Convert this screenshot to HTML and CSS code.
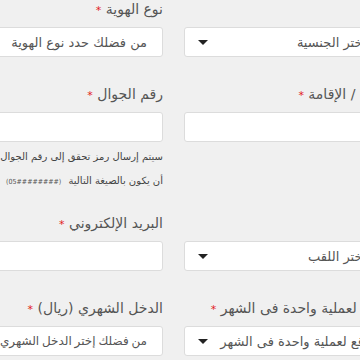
FILE: index.html
```html
<!DOCTYPE html>
<html lang="ar">
<head>
    <meta charset="UTF-8">
    <meta name="viewport" content="width=device-width, initial-scale=1.0">
    <title>التسجيل</title>
    <link rel="stylesheet" href="styles.css">
</head>
<body>
    <form class="reg-form">
        <div class="form-row">
            <div class="form-group">
                <label class="field-label">الجنسية <span class="req">*</span></label>
                <div class="field select-field"><span>من فضلك اختر الجنسية</span><span class="caret"></span></div>
            </div>
            <div class="form-group">
                <label class="field-label">نوع الهوية <span class="req">*</span></label>
                <div class="field select-field"><span>من فضلك حدد نوع الهوية</span><span class="caret"></span></div>
            </div>
        </div>

        <div class="form-row">
            <div class="form-group">
                <label class="field-label">الهوية الوطنية / الإقامة <span class="req">*</span></label>
                <div class="field"></div>
            </div>
            <div class="form-group">
                <label class="field-label">رقم الجوال <span class="req">*</span></label>
                <div class="field"></div>
                <p class="help-text">سيتم إرسال رمز تحقق إلى رقم الجوال المذكور ويجب<br>أن يكون بالصيغة التالية <span class="format">(05########)</span></p>
            </div>
        </div>

        <div class="form-row">
            <div class="form-group">
                <label class="field-label">اللقب <span class="req">*</span></label>
                <div class="field select-field"><span>من فضلك اختر اللقب</span><span class="caret"></span></div>
            </div>
            <div class="form-group">
                <label class="field-label">البريد الإلكتروني <span class="req">*</span></label>
                <div class="field"></div>
            </div>
        </div>

        <div class="form-row">
            <div class="form-group">
                <label class="field-label">المبلغ المتوقع لعملية واحدة فى الشهر <span class="req">*</span></label>
                <div class="field select-field"><span>المبلغ المتوقع لعملية واحدة فى الشهر</span><span class="caret"></span></div>
            </div>
            <div class="form-group">
                <label class="field-label">الدخل الشهري (ريال) <span class="req">*</span></label>
                <div class="field select-field"><span class="tight">من فضلك إختر الدخل الشهري</span><span class="caret"></span></div>
            </div>
        </div>
    </form>
</body>
</html>
```

FILE: styles.css
```css
/* Reset */
* {
    margin: 0;
    padding: 0;
    box-sizing: border-box;
}

body {
    font-family: 'DejaVu Sans', Tahoma, sans-serif;
    background-color: #f0f0f0;
    color: #555;
    overflow: hidden;
}

/* Form layout */
.reg-form {
    direction: rtl;
    width: 533px;
    margin-left: -93px;
    padding-top: 1px;
}

.form-row {
    display: grid;
    grid-template-columns: 1fr 1fr;
    column-gap: 21px;
    align-items: start;
    margin-bottom: 29px;
}

.field-label {
    display: block;
    font-size: 14px;
    line-height: 16px;
    color: #555;
    margin-bottom: 10px;
    white-space: nowrap;
}

.req {
    color: #e21b1b;
    font-size: 11px;
    line-height: 0;
}

.field {
    height: 30px;
    background-color: #fff;
    border: 1px solid #dcdcdc;
    border-radius: 3px;
    padding: 0 15px 0 13px;
    font-size: 13px;
    color: #555;
}

.select-field {
    display: flex;
    align-items: center;
    justify-content: space-between;
    white-space: nowrap;
}

.select-field .tight {
    font-size: 12px;
    word-spacing: -1px;
}

.caret {
    width: 0;
    height: 0;
    border-left: 5px solid transparent;
    border-right: 5px solid transparent;
    border-top: 5px solid #222;
}

/* Help text under mobile */
.help-text {
    font-size: 10px;
    line-height: 24px;
    color: #444;
    margin: 3px 0 -8px;
    white-space: nowrap;
}

.help-text .format {
    direction: ltr;
    unicode-bidi: isolate;
    font-family: 'DejaVu Sans Condensed', 'DejaVu Sans', sans-serif;
    font-size: 7px;
    color: #555;
    margin-right: 4px;
}
```
